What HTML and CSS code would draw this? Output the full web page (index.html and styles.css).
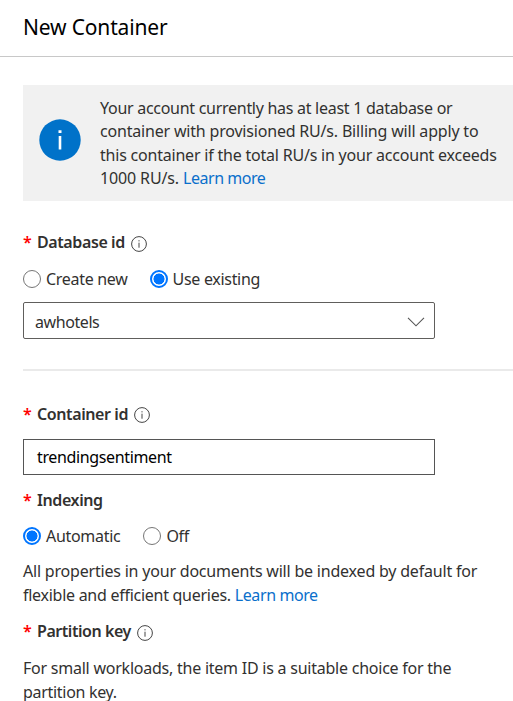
FILE: index.html
```html
<!DOCTYPE html>
<html lang="en">
<head>
<meta charset="utf-8">
<title>New Container</title>
<link rel="stylesheet" href="styles.css">
</head>
<body>
<header class="header"><h1 class="title">New Container</h1></header>
<main class="panel">
  <section class="banner">
    <svg class="banner-icon" width="42" height="42" viewBox="0 0 42 42"><circle cx="21" cy="21" r="20.7" fill="#0072c9"/><path d="M19.5 11.2h3v2.8h-3zM19.7 17h2.6v13.5h-2.6z" fill="#fff"/></svg>
    <p class="banner-text"><span class="line b1">Your account currently has at least 1 database or</span><span class="line b2">container with provisioned RU/s. Billing will apply to</span><span class="line b3">this container if the total RU/s in your account exceeds</span><span class="line b4">1000 RU/s. <a class="link">Learn more</a></span></p>
  </section>
  <div class="label label-db"><span class="star">*</span><span class="name">Database id</span><svg class="info info-low" width="16" height="16" viewBox="0 0 16 16"><circle cx="8" cy="8" r="7.4"/><path d="M8 6.7v5M8 4.2v1.2"/></svg></div>
  <div class="radios">
    <span class="radio"></span><span class="option">Create new</span>
    <span class="radio checked second-db"></span><span class="option">Use existing</span>
  </div>
  <div class="select"><span class="value">awhotels</span><svg width="18" height="11" viewBox="0 0 18 11"><path d="M1 1.8l8 8 8-8" fill="none" stroke="#555" stroke-width="1.1"/></svg></div>
  <hr class="divider">
  <div class="label label-container"><span class="star">*</span><span class="name">Container id</span><svg class="info" width="16" height="16" viewBox="0 0 16 16"><circle cx="8" cy="8" r="7.4"/><path d="M8 6.7v5M8 4.2v1.2"/></svg></div>
  <div class="input"><span class="typed">trendingsentiment</span></div>
  <div class="label label-indexing"><span class="star">*</span><span class="name">Indexing</span></div>
  <div class="radios radios-indexing">
    <span class="radio checked"></span><span class="option">Automatic</span>
    <span class="radio second-index"></span><span class="option">Off</span>
  </div>
  <p class="note note-indexing"><span class="line p1">All properties in your documents will be indexed by default for</span><span class="line p2">flexible and efficient queries. <a class="link">Learn more</a></span></p>
  <div class="label label-partition"><span class="star">*</span><span class="name name-key">Partition key</span><svg class="info info-low" width="16" height="16" viewBox="0 0 16 16"><circle cx="8" cy="8" r="7.4"/><path d="M8 6.7v5M8 4.2v1.2"/></svg></div>
  <p class="note note-partition"><span class="line p3">For small workloads, the item ID is a suitable choice for the</span><span class="line p4">partition key.</span></p>
</main>
</body>
</html>
```
FILE: styles.css
```css
* { box-sizing: border-box; }
body { margin: 0; height: 701px; background: #fff; color: #323130; font: 16px/24px "Noto Sans", "Open Sans", sans-serif; letter-spacing: -0.3px; }
.header { height: 57px; border-bottom: 1px solid #c8c8c8; padding: 12px 0 0 23px; }
.title { margin: 0; font-size: 21px; line-height: 30px; font-weight: 400; color: #000; letter-spacing: -0.16px; white-space: nowrap; }
.panel { height: 644px; padding: 28px 0 0 23px; }
.banner { display: flex; height: 116px; background: #f1f1f1; padding: 12px 0 0 16px; }
.banner-icon { margin-top: 22px; flex: none; }
.banner-text { margin: 0 0 0 19px; line-height: 23.4px; }
.line { display: block; white-space: nowrap; }
.b1 { letter-spacing: -0.28px; }
.b2 { letter-spacing: -0.19px; }
.b3 { letter-spacing: -0.21px; }
.b4 { letter-spacing: -0.14px; }
.link { color: #0a6fcb; letter-spacing: -0.45px; }
.label { display: flex; align-items: center; height: 24px; font-weight: 600; letter-spacing: -0.4px; }
.star { width: 14px; color: #f00; letter-spacing: 0; }
.name { white-space: nowrap; }
.name-key { letter-spacing: -0.45px; }
.info { margin: 2px 0 0 6px; fill: none; stroke: #444; stroke-width: 1; flex: none; }
.info-low { margin-top: 3px; }
.label-db { margin-top: 29px; }
.radios { display: flex; align-items: center; height: 24px; margin-top: 13px; }
.radios-indexing { margin-top: 12px; }
.radio { width: 18px; height: 18px; border: 1.5px solid #767676; border-radius: 50%; flex: none; }
.checked { border: 2px solid #0075ff; background: radial-gradient(circle, #0075ff 5.2px, #fff 5.8px); }
.option { margin-left: 5px; white-space: nowrap; }
.second-db { margin-left: 22px; }
.second-index { margin-left: 23px; }
.select { display: flex; align-items: center; justify-content: space-between; width: 412px; height: 37px; margin-top: 11px; padding: 2px 9px 0 11px; border: 1px solid #605e5c; border-radius: 2px; }
.value { letter-spacing: -0.42px; }
.divider { height: 2px; margin: 30px 0 0; border: 0; background: #eaeaea; }
.label-container { margin-top: 31px; }
.input { width: 412px; height: 36px; margin-top: 13px; padding: 5px 0 0 13px; border: 1px solid #555; color: #000; }
.typed { letter-spacing: -0.36px; }
.label-indexing { margin-top: 13px; }
.note { margin: 0; }
.note-indexing { margin-top: 11px; }
.p1 { letter-spacing: -0.2px; }
.p2 { letter-spacing: -0.27px; }
.p2 .link { letter-spacing: -0.4px; }
.label-partition { margin-top: 12px; }
.note-partition { margin-top: 13px; }
.p3 { letter-spacing: -0.235px; }
.p4 { margin-top: 3px; line-height: 18px; }
```
